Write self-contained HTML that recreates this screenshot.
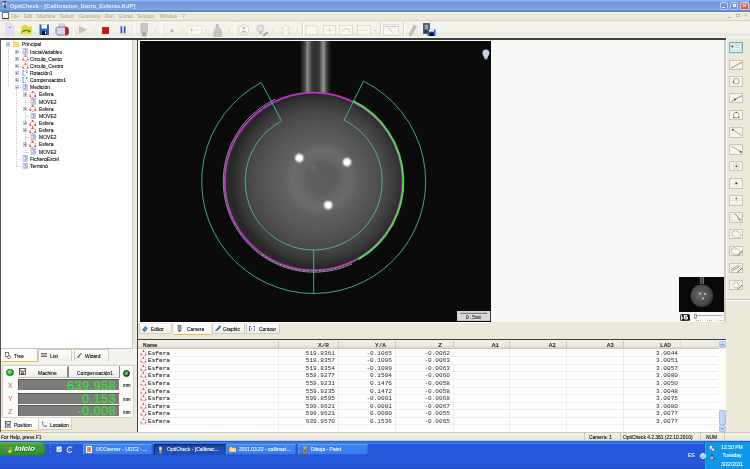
<!DOCTYPE html>
<html><head><meta charset="utf-8">
<style>
*{box-sizing:border-box}
html,body{margin:0;padding:0}
body{width:750px;height:469px;overflow:hidden;position:relative;background:#ECE9D8;font-family:"Liberation Sans",sans-serif;color:#000}
.a{position:absolute}
.t{position:absolute;white-space:nowrap;line-height:1;will-change:transform;-webkit-text-stroke:0.08px currentColor}
</style></head><body>

<!-- title bar -->
<div class="a" style="left:0;top:0;width:750px;height:11.8px;background:linear-gradient(#a0bef8 0,#8cb0ee 0.8px,#7198d8 2.2px,#7699da 5px,#7ba3e0 8px,#78a8dc 9.5px,#6285d2 10.8px,#5a7cca 11.8px)"></div><div class="a" style="left:0;top:11.8px;width:750px;height:0.8px;background:#f4f8ec"></div>
<div class="t" style="left:10px;top:3.6px;font-size:5.8px;font-weight:bold;color:#e6eefc;-webkit-text-stroke:0">OptiCheck - [Calibracion_Barra_Esferas.KdP]</div>
<svg class="a" style="left:1.8px;top:1.2px" width="5.6" height="8.4" viewBox="0 0 14 21"><rect x="3" y="0.5" width="8" height="4" fill="#2a2a30"/><rect x="2" y="4" width="10" height="7" fill="#e8e8ee"/><rect x="6" y="6" width="3" height="12" fill="#1e2a40"/></svg>
<div class="a" style="left:720px;top:1.6px;width:8px;height:8px;background:linear-gradient(#7d9ce6,#6a8ade);border:0.5px solid #bccbf0;border-radius:1.2px"></div>
<div class="a" style="left:722px;top:6.5px;width:3px;height:1px;background:#fff"></div>
<div class="a" style="left:730px;top:1.6px;width:8px;height:8px;background:linear-gradient(#7d9ce6,#6a8ade);border:0.5px solid #bccbf0;border-radius:1.2px"></div>
<div class="a" style="left:732.5px;top:3.5px;width:3.5px;height:3.5px;border:0.8px solid #fff"></div>
<div class="a" style="left:740px;top:1.6px;width:9px;height:8px;background:linear-gradient(#d07a78,#c05a5a);border:0.5px solid #e8c4c4;border-radius:1.2px"></div>
<svg class="a" style="left:742.3px;top:3.4px" width="4.6" height="4.6" viewBox="0 0 5 5"><path d="M0.6,0.6 L4.4,4.4 M4.4,0.6 L0.6,4.4" stroke="#fff" stroke-width="1"/></svg>

<!-- menu bar -->
<div class="a" style="left:0;top:12.6px;width:750px;height:7.4px;background:linear-gradient(#ebe7d9,#ece8dd 50%,#efebe2)"></div>
<div class="a" style="left:1.8px;top:12.4px;width:6.8px;height:6.2px;background:#fdfdfd;border:0.6px solid #777;border-top:1.4px solid #3d7fa0;border-bottom:0.9px solid #333"></div>
<div class="t" style="left:10.5px;top:15px;font-size:4.9px;color:#b3b09f;word-spacing:0">File</div>
<div class="t" style="left:24px;top:15px;font-size:4.9px;color:#b3b09f">Edit</div>
<div class="t" style="left:37.3px;top:15px;font-size:4.9px;color:#b3b09f">Machine</div>
<div class="t" style="left:60px;top:15px;font-size:4.9px;color:#b3b09f">Select</div>
<div class="t" style="left:78.7px;top:15px;font-size:4.9px;color:#b3b09f">Geometry</div>
<div class="t" style="left:104.5px;top:15px;font-size:4.9px;color:#b3b09f">Run</div>
<div class="t" style="left:118.7px;top:15px;font-size:4.9px;color:#b3b09f">Extras</div>
<div class="t" style="left:137.3px;top:15px;font-size:4.9px;color:#b3b09f">Session</div>
<div class="t" style="left:159.5px;top:15px;font-size:4.9px;color:#b3b09f">Window</div>
<div class="t" style="left:181.9px;top:15px;font-size:4.9px;color:#b3b09f">?</div>
<div class="a" style="left:727.6px;top:17.2px;width:3px;height:0.8px;background:#bcb9aa"></div>
<div class="a" style="left:736px;top:13.6px;width:3.6px;height:3.2px;border:0.6px solid #c4c1b2;border-top-width:1px"></div>
<svg class="a" style="left:744px;top:13.4px" width="3.6" height="3.6" viewBox="0 0 4 4"><path d="M0.5,0.5 L3.5,3.5 M3.5,0.5 L0.5,3.5" stroke="#bcb9aa" stroke-width="0.7"/></svg>

<!-- toolbar -->
<div class="a" style="left:0;top:19.6px;width:750px;height:18.6px;background:linear-gradient(#d6d2c2 0,#d6d2c2 0.9px,#f5f3eb 1.6px,#f3f2ea 60%,#e8e8e4 80%,#ecefdf 92%,#fbfbf2)"></div>
<div class="a" style="left:0;top:38.2px;width:726px;height:1.7px;background:#3e3e3a"></div>
<svg class="a" style="left:4.5px;top:23px" width="9.5" height="13" viewBox="0 0 19 26"><path d="M2,1 h10 l5,5 v19 h-15z" fill="#e6e2fa" stroke="#c4c0e0" stroke-width="1"/><path d="M6,8 l6,-1 -1,4z" fill="#8a8aa0"/><path d="M4,20 h10" stroke="#d8d4f0" stroke-width="2"/></svg>
<svg class="a" style="left:20px;top:24px" width="13.5" height="11.5" viewBox="0 0 27 23"><path d="M3,6 l4,-4 h7 l2,3 h8 v14 h-21z" fill="#f3d03a"/><path d="M1,12 h24 l-3,9 h-20z" fill="#f7dc55"/><path d="M2,20 c2,-8 8,-10 17,-7 l-2,-3 5,5 -6,3 1,-3 c-6,-2 -11,0 -15,5z" fill="#1c9a1c"/></svg>
<svg class="a" style="left:39px;top:24px" width="10.5" height="11.5" viewBox="0 0 21 23"><path d="M1,1 h19 v21 h-19z" fill="#2a62d0"/><rect x="5" y="1" width="11" height="8" fill="#fff"/><rect x="6" y="14" width="9" height="8" fill="#111"/><rect x="12" y="15" width="2" height="5" fill="#fff"/></svg>
<svg class="a" style="left:54.5px;top:23px" width="14.5" height="13" viewBox="0 0 29 26"><path d="M9,2 h10 v7 h-10z" fill="#dedee8" stroke="#a8a8b8" stroke-width="1"/><path d="M2,12 c0,-3 3,-4 6,-4 h14 c3,0 5,2 5,5 v7 c0,3 -2,4 -5,4 h-14 c-4,0 -6,-2 -6,-5z" fill="#d8d4f2" stroke="#3a3a4a" stroke-width="1.2"/><path d="M20,8 c4,0 7,2 7,6 v6 c0,3 -2,4 -5,4 h-2z" fill="#c0202a"/></svg>
<div class="a" style="left:72.8px;top:22px;width:0.6px;height:14px;background:#d6d3c4"></div><div class="a" style="left:73.39999999999999px;top:22px;width:0.6px;height:14px;background:#fff"></div>
<svg class="a" style="left:79px;top:26.4px" width="8" height="7.6" viewBox="0 0 16 15"><path d="M1,1 L15,7.5 L1,14z" fill="#c4c4c4" stroke="#a8a8a8" stroke-width="1"/></svg>
<div class="a" style="left:93px;top:29.8px;width:0;height:0;border-left:1px solid transparent;border-right:1px solid transparent;border-top:1px solid #b0ae9e"></div>
<svg class="a" style="left:101.7px;top:26.6px" width="7.5" height="7.3" viewBox="0 0 15 15"><rect x="0.5" y="0.5" width="14" height="14" fill="#e01010" stroke="#b00000"/></svg>
<svg class="a" style="left:120.2px;top:26.4px" width="6" height="7.6" viewBox="0 0 12 15"><rect x="1" y="0.5" width="3.5" height="14" fill="#2a58c8"/><rect x="7.5" y="0.5" width="3.5" height="14" fill="#2a58c8"/></svg>
<div class="a" style="left:133.5px;top:22px;width:0.6px;height:14px;background:#d6d3c4"></div><div class="a" style="left:134.1px;top:22px;width:0.6px;height:14px;background:#fff"></div>
<svg class="a" style="left:140.3px;top:22.7px" width="8.4" height="14" viewBox="0 0 17 28"><rect x="2" y="1" width="13" height="18" fill="#c8c8c4" stroke="#a8a8a4" stroke-width="1"/><rect x="4" y="19" width="9" height="8" fill="#a8a8a4"/></svg>
<div class="a" style="left:154.2px;top:29.8px;width:0;height:0;border-left:1px solid transparent;border-right:1px solid transparent;border-top:1px solid #b0ae9e"></div>
<div class="a" style="left:160.8px;top:22px;width:0.6px;height:14px;background:#d6d3c4"></div><div class="a" style="left:161.4px;top:22px;width:0.6px;height:14px;background:#fff"></div>
<svg class="a" style="left:170px;top:29px" width="4" height="3.5" viewBox="0 0 8 7"><circle cx="4" cy="3.5" r="3" fill="#b4b4b0"/></svg>
<div class="a" style="left:181px;top:29.8px;width:0;height:0;border-left:1px solid transparent;border-right:1px solid transparent;border-top:1px solid #b0ae9e"></div>
<svg class="a" style="left:187px;top:24.5px" width="15" height="10.3" viewBox="0 0 30 21"><rect x="1" y="1" width="28" height="19" fill="#faf9f4" stroke="#c8c6bb" stroke-width="1.2" stroke-dasharray="3 2"/><circle cx="9" cy="10" r="2" fill="#b0aea4"/><path d="M9,4 v12 M13,10 h10" stroke="#c8c6bb" stroke-width="1"/></svg>
<div class="a" style="left:204.6px;top:29.8px;width:0;height:0;border-left:1px solid transparent;border-right:1px solid transparent;border-top:1px solid #b0ae9e"></div>
<svg class="a" style="left:212px;top:23.5px" width="11" height="13" viewBox="0 0 22 26"><path d="M8,1 h5 v6 c4,2 6,5 6,9 v9 h-15 v-9 c0,-4 2,-7 4,-9z" fill="#c6c6c2" stroke="#aaa" stroke-width="1"/></svg>
<div class="a" style="left:228px;top:29.8px;width:0;height:0;border-left:1px solid transparent;border-right:1px solid transparent;border-top:1px solid #b0ae9e"></div>
<div class="a" style="left:233.6px;top:22px;width:0.6px;height:14px;background:#d6d3c4"></div><div class="a" style="left:234.2px;top:22px;width:0.6px;height:14px;background:#fff"></div>
<svg class="a" style="left:238px;top:24px" width="11.5" height="11.5" viewBox="0 0 23 23"><circle cx="11.5" cy="11.5" r="10" fill="#f8f7f2" stroke="#c0beb3" stroke-width="1.2"/><circle cx="11.5" cy="8" r="2.5" fill="#b8b6ac"/><path d="M7,17 c1,-5 8,-5 9,0" fill="#b8b6ac"/></svg>
<svg class="a" style="left:256px;top:23.5px" width="13" height="13" viewBox="0 0 26 26"><circle cx="9" cy="9" r="7" fill="#e4e4e2" stroke="#b0b0ac" stroke-width="1.2"/><rect x="6" y="15" width="6" height="5" fill="#c0c0bc"/><path d="M13,22 l9,-7 3,3 -9,7z" fill="#a8a8a4"/></svg>
<div class="a" style="left:272px;top:29.8px;width:0;height:0;border-left:1px solid transparent;border-right:1px solid transparent;border-top:1px solid #b0ae9e"></div>
<svg class="a" style="left:279.6px;top:23.5px" width="11.2" height="13" viewBox="0 0 22 26"><path d="M11,1 l9,8 h-4 v8 h4 l-9,8 -9,-8 h4 v-8 h-4z" fill="#f6f5f0" stroke="#c8c6bc" stroke-width="1"/></svg>
<div class="a" style="left:296px;top:29.8px;width:0;height:0;border-left:1px solid transparent;border-right:1px solid transparent;border-top:1px solid #b0ae9e"></div>
<div class="a" style="left:302px;top:22px;width:0.6px;height:14px;background:#d6d3c4"></div><div class="a" style="left:302.6px;top:22px;width:0.6px;height:14px;background:#fff"></div>
<svg class="a" style="left:304.8px;top:24.5px" width="13.2" height="10.3" viewBox="0 0 26 21"><rect x="1.5" y="1.5" width="23" height="18" fill="#f8f7f2" stroke="#b8b6ac" stroke-width="1.2" stroke-dasharray="4 2"/></svg>
<svg class="a" style="left:322.5px;top:24.5px" width="13.2" height="10.3" viewBox="0 0 26 21"><rect x="1" y="1" width="24" height="19" fill="#f8f7f2" stroke="#c8c6bb" stroke-width="1"/><path d="M13,5 v11 M7,10.5 h12" stroke="#b0aea4" stroke-width="1.2" stroke-dasharray="2 1.5"/></svg>
<svg class="a" style="left:339.3px;top:24.5px" width="14" height="10.3" viewBox="0 0 28 21"><rect x="1" y="1" width="26" height="19" fill="#f8f7f2" stroke="#c8c6bb" stroke-width="1"/><path d="M6,14 c2,-7 12,-9 16,-2 l1,4" fill="none" stroke="#b0aea4" stroke-width="1.4"/></svg>
<svg class="a" style="left:357px;top:24.5px" width="14" height="10.3" viewBox="0 0 28 21"><rect x="1" y="1" width="26" height="19" fill="#f8f7f2" stroke="#c8c6bb" stroke-width="1"/><path d="M4,10.5 h20" stroke="#b8b6ac" stroke-width="1.2" stroke-dasharray="3 2"/></svg>
<div class="a" style="left:373.8px;top:29.8px;width:0;height:0;border-left:1px solid transparent;border-right:1px solid transparent;border-top:1px solid #b0ae9e"></div>
<div class="a" style="left:380.4px;top:22px;width:0.6px;height:14px;background:#d6d3c4"></div><div class="a" style="left:381.0px;top:22px;width:0.6px;height:14px;background:#fff"></div>
<svg class="a" style="left:383px;top:24px" width="16" height="11.5" viewBox="0 0 32 23"><rect x="1" y="1" width="30" height="21" fill="#f8f7f2" stroke="#c8c6bb" stroke-width="1"/><path d="M3,5 h26 M10,8 l12,11" stroke="#a8a6a0" stroke-width="1.2"/></svg>
<div class="a" style="left:403.3px;top:22px;width:0.6px;height:14px;background:#d6d3c4"></div><div class="a" style="left:403.90000000000003px;top:22px;width:0.6px;height:14px;background:#fff"></div>
<svg class="a" style="left:408px;top:23.5px" width="10" height="12.5" viewBox="0 0 20 25"><path d="M12,1 l6,4 -10,17 -6,-3z" fill="#c0c0bc"/><path d="M2,19 l6,3 -4,3z" fill="#a8a8a4"/></svg>
<svg class="a" style="left:423px;top:22.8px" width="13" height="13.5" viewBox="0 0 26 27"><rect x="1" y="1" width="12" height="20" fill="#3a3a40" stroke="#222" stroke-width="1"/><rect x="3" y="3" width="8" height="10" fill="#9aa0b8"/><path d="M9,13 h16 v13 h-16z" fill="#2a62d0"/><rect x="13" y="19" width="8" height="7" fill="#111"/><rect x="12" y="13" width="10" height="4" fill="#fff"/></svg>
<!-- left panel -->
<div class="a" style="left:0;top:40px;width:1px;height:392px;background:#555"></div>
<div id="tree" class="a" style="left:1px;top:40px;width:132px;height:308.5px;background:#fff;border-right:1.5px solid #c8c6bb;border-bottom:1px solid #c8c6bb"></div>

<!-- tree items -->
<div class="a" style="left:8.2px;top:46.4px;width:0;height:40.8px;border-left:0.6px dotted #c8c8c8"></div>
<div class="a" style="left:16.4px;top:89.2px;width:0;height:76.5px;border-left:0.6px dotted #c8c8c8"></div>
<div class="a" style="left:24.8px;top:96.4px;width:0;height:55.1px;border-left:0.6px dotted #c8c8c8"></div>
<div class="a" style="left:16.4px;top:51.5px;width:4.9px;height:0;border-top:0.6px dotted #c8c8c8"></div>
<div class="a" style="left:16.4px;top:58.7px;width:4.9px;height:0;border-top:0.6px dotted #c8c8c8"></div>
<div class="a" style="left:16.4px;top:65.8px;width:4.9px;height:0;border-top:0.6px dotted #c8c8c8"></div>
<div class="a" style="left:16.4px;top:73.0px;width:4.9px;height:0;border-top:0.6px dotted #c8c8c8"></div>
<div class="a" style="left:16.4px;top:80.1px;width:4.9px;height:0;border-top:0.6px dotted #c8c8c8"></div>
<div class="a" style="left:16.4px;top:87.2px;width:4.9px;height:0;border-top:0.6px dotted #c8c8c8"></div>
<div class="a" style="left:24.8px;top:94.4px;width:4.2px;height:0;border-top:0.6px dotted #c8c8c8"></div>
<div class="a" style="left:24.8px;top:101.5px;width:4.2px;height:0;border-top:0.6px dotted #c8c8c8"></div>
<div class="a" style="left:24.8px;top:108.7px;width:4.2px;height:0;border-top:0.6px dotted #c8c8c8"></div>
<div class="a" style="left:24.8px;top:115.8px;width:4.2px;height:0;border-top:0.6px dotted #c8c8c8"></div>
<div class="a" style="left:24.8px;top:122.9px;width:4.2px;height:0;border-top:0.6px dotted #c8c8c8"></div>
<div class="a" style="left:24.8px;top:130.1px;width:4.2px;height:0;border-top:0.6px dotted #c8c8c8"></div>
<div class="a" style="left:24.8px;top:137.2px;width:4.2px;height:0;border-top:0.6px dotted #c8c8c8"></div>
<div class="a" style="left:24.8px;top:144.4px;width:4.2px;height:0;border-top:0.6px dotted #c8c8c8"></div>
<div class="a" style="left:24.8px;top:151.5px;width:4.2px;height:0;border-top:0.6px dotted #c8c8c8"></div>
<div class="a" style="left:16.4px;top:158.6px;width:4.9px;height:0;border-top:0.6px dotted #c8c8c8"></div>
<div class="a" style="left:16.4px;top:165.8px;width:4.9px;height:0;border-top:0.6px dotted #c8c8c8"></div>
<div class="a" style="left:6.2px;top:42.40px;width:4.2px;height:4.2px;border:0.6px solid #c4c8d0;background:linear-gradient(#f4f4f4,#d4d8dc)"></div>
<div class="a" style="left:7.2px;top:44.20px;width:2.2px;height:0.6px;background:#8494a4"></div>
<svg class="a" style="left:13.2px;top:41.40px" width="6.5" height="6" viewBox="0 0 13 12"><path d="M0.5,2 h4 l1,1.5 h7 v8 h-12z" fill="#f6d94a" stroke="#c9a21a" stroke-width="0.8"/><path d="M0.5,4.5 h12 v7 h-12z" fill="#fbe26b"/></svg>
<div class="t" style="left:21.8px;top:42.40px;font-size:5px">Principal</div>
<div class="a" style="left:14.6px;top:49.54px;width:4.2px;height:4.2px;border:0.6px solid #c4c8d0;background:linear-gradient(#f4f4f4,#d4d8dc)"></div>
<div class="a" style="left:15.6px;top:51.34px;width:2.2px;height:0.6px;background:#8494a4"></div>
<div class="a" style="left:16.4px;top:50.54px;width:0.6px;height:2.2px;background:#8494a4"></div>
<svg class="a" style="left:21.8px;top:48.34px" width="6" height="6.6" viewBox="0 0 12 13"><rect x="2" y="0.5" width="8.5" height="12" fill="#e4e4fa" stroke="#8484c4" stroke-width="0.9"/><path d="M5,3 h3 v6 c0,2 -3,2 -3.5,0" fill="none" stroke="#4a4a9a" stroke-width="1.1"/></svg>
<div class="t" style="left:30.1px;top:49.54px;font-size:5px">IniciaVariables</div>
<div class="a" style="left:14.6px;top:56.68px;width:4.2px;height:4.2px;border:0.6px solid #c4c8d0;background:linear-gradient(#f4f4f4,#d4d8dc)"></div>
<div class="a" style="left:15.6px;top:58.48px;width:2.2px;height:0.6px;background:#8494a4"></div>
<div class="a" style="left:16.4px;top:57.68px;width:0.6px;height:2.2px;background:#8494a4"></div>
<svg class="a" style="left:21.5px;top:55.38px" width="7.0" height="6.65" viewBox="0 0 14 13"><circle cx="7" cy="7" r="5" fill="none" stroke="#c82020" stroke-width="1.3" stroke-dasharray="2.2 1.6"/><circle cx="7" cy="1.8" r="1.5" fill="#d81818"/><circle cx="2.3" cy="9.5" r="1.5" fill="#d81818"/><circle cx="11.7" cy="9.5" r="1.5" fill="#d81818"/></svg>
<div class="t" style="left:30.1px;top:56.68px;font-size:5px">Circulo_Canto</div>
<div class="a" style="left:14.6px;top:63.82px;width:4.2px;height:4.2px;border:0.6px solid #c4c8d0;background:linear-gradient(#f4f4f4,#d4d8dc)"></div>
<div class="a" style="left:15.6px;top:65.62px;width:2.2px;height:0.6px;background:#8494a4"></div>
<div class="a" style="left:16.4px;top:64.82px;width:0.6px;height:2.2px;background:#8494a4"></div>
<svg class="a" style="left:21.5px;top:62.52px" width="7.0" height="6.65" viewBox="0 0 14 13"><circle cx="7" cy="7" r="5" fill="none" stroke="#c82020" stroke-width="1.3" stroke-dasharray="2.2 1.6"/><circle cx="7" cy="1.8" r="1.5" fill="#d81818"/><circle cx="2.3" cy="9.5" r="1.5" fill="#d81818"/><circle cx="11.7" cy="9.5" r="1.5" fill="#d81818"/></svg>
<div class="t" style="left:30.1px;top:63.82px;font-size:5px">Circulo_Centro</div>
<div class="a" style="left:14.6px;top:70.96px;width:4.2px;height:4.2px;border:0.6px solid #c4c8d0;background:linear-gradient(#f4f4f4,#d4d8dc)"></div>
<div class="a" style="left:15.6px;top:72.76px;width:2.2px;height:0.6px;background:#8494a4"></div>
<div class="a" style="left:16.4px;top:71.96px;width:0.6px;height:2.2px;background:#8494a4"></div>
<svg class="a" style="left:21.8px;top:69.76px" width="6.5" height="6.5" viewBox="0 0 13 13"><path d="M2,1 v11 M0.5,1 h3 M0.5,12 h8" stroke="#2050c0" stroke-width="1.2" fill="none"/><circle cx="10" cy="3" r="2.2" fill="none" stroke="#2050c0" stroke-width="1"/></svg>
<div class="t" style="left:30.1px;top:70.96px;font-size:5px">Rotación1</div>
<div class="a" style="left:14.6px;top:78.10px;width:4.2px;height:4.2px;border:0.6px solid #c4c8d0;background:linear-gradient(#f4f4f4,#d4d8dc)"></div>
<div class="a" style="left:15.6px;top:79.90px;width:2.2px;height:0.6px;background:#8494a4"></div>
<div class="a" style="left:16.4px;top:79.10px;width:0.6px;height:2.2px;background:#8494a4"></div>
<svg class="a" style="left:21.8px;top:76.90px" width="6.5" height="6.5" viewBox="0 0 13 13"><path d="M2,1 v11 M0.5,1 h3 M0.5,12 h8" stroke="#2050c0" stroke-width="1.2" fill="none"/><path d="M7,1 l5,0 l-2.5,4z" fill="#20b020"/></svg>
<div class="t" style="left:30.1px;top:78.10px;font-size:5px">Compensación1</div>
<div class="a" style="left:14.6px;top:85.24px;width:4.2px;height:4.2px;border:0.6px solid #c4c8d0;background:linear-gradient(#f4f4f4,#d4d8dc)"></div>
<div class="a" style="left:15.6px;top:87.04px;width:2.2px;height:0.6px;background:#8494a4"></div>
<svg class="a" style="left:21.8px;top:84.04px" width="6" height="6.6" viewBox="0 0 12 13"><rect x="2" y="0.5" width="8.5" height="12" fill="#e4e4fa" stroke="#8484c4" stroke-width="0.9"/><path d="M5,3 h3 v6 c0,2 -3,2 -3.5,0" fill="none" stroke="#4a4a9a" stroke-width="1.1"/></svg>
<div class="t" style="left:30.1px;top:85.24px;font-size:5px">Medición</div>
<div class="a" style="left:23px;top:92.38px;width:4.2px;height:4.2px;border:0.6px solid #c4c8d0;background:linear-gradient(#f4f4f4,#d4d8dc)"></div>
<div class="a" style="left:24px;top:94.18px;width:2.2px;height:0.6px;background:#8494a4"></div>
<div class="a" style="left:24.8px;top:93.38px;width:0.6px;height:2.2px;background:#8494a4"></div>
<svg class="a" style="left:29.2px;top:91.08px" width="7.5" height="7.12" viewBox="0 0 14 13"><circle cx="7" cy="7" r="5" fill="none" stroke="#c82020" stroke-width="1.3" stroke-dasharray="2.2 1.6"/><circle cx="7" cy="1.8" r="1.5" fill="#d81818"/><circle cx="2.3" cy="9.5" r="1.5" fill="#d81818"/><circle cx="11.7" cy="9.5" r="1.5" fill="#d81818"/></svg>
<div class="t" style="left:38.6px;top:92.38px;font-size:5px">Esfera</div>
<svg class="a" style="left:29.5px;top:98.32px" width="6" height="6.6" viewBox="0 0 12 13"><rect x="2" y="0.5" width="8.5" height="12" fill="#e4e4fa" stroke="#8484c4" stroke-width="0.9"/><path d="M5,3 h3 v6 c0,2 -3,2 -3.5,0" fill="none" stroke="#4a4a9a" stroke-width="1.1"/></svg>
<div class="t" style="left:38.6px;top:99.52px;font-size:5px">MOVE2</div>
<div class="a" style="left:23px;top:106.66px;width:4.2px;height:4.2px;border:0.6px solid #c4c8d0;background:linear-gradient(#f4f4f4,#d4d8dc)"></div>
<div class="a" style="left:24px;top:108.46px;width:2.2px;height:0.6px;background:#8494a4"></div>
<div class="a" style="left:24.8px;top:107.66px;width:0.6px;height:2.2px;background:#8494a4"></div>
<svg class="a" style="left:29.2px;top:105.36px" width="7.5" height="7.12" viewBox="0 0 14 13"><circle cx="7" cy="7" r="5" fill="none" stroke="#c82020" stroke-width="1.3" stroke-dasharray="2.2 1.6"/><circle cx="7" cy="1.8" r="1.5" fill="#d81818"/><circle cx="2.3" cy="9.5" r="1.5" fill="#d81818"/><circle cx="11.7" cy="9.5" r="1.5" fill="#d81818"/></svg>
<div class="t" style="left:38.6px;top:106.66px;font-size:5px">Esfera</div>
<svg class="a" style="left:29.5px;top:112.60px" width="6" height="6.6" viewBox="0 0 12 13"><rect x="2" y="0.5" width="8.5" height="12" fill="#e4e4fa" stroke="#8484c4" stroke-width="0.9"/><path d="M5,3 h3 v6 c0,2 -3,2 -3.5,0" fill="none" stroke="#4a4a9a" stroke-width="1.1"/></svg>
<div class="t" style="left:38.6px;top:113.80px;font-size:5px">MOVE2</div>
<div class="a" style="left:23px;top:120.94px;width:4.2px;height:4.2px;border:0.6px solid #c4c8d0;background:linear-gradient(#f4f4f4,#d4d8dc)"></div>
<div class="a" style="left:24px;top:122.74px;width:2.2px;height:0.6px;background:#8494a4"></div>
<div class="a" style="left:24.8px;top:121.94px;width:0.6px;height:2.2px;background:#8494a4"></div>
<svg class="a" style="left:29.2px;top:119.64px" width="7.5" height="7.12" viewBox="0 0 14 13"><circle cx="7" cy="7" r="5" fill="none" stroke="#c82020" stroke-width="1.3" stroke-dasharray="2.2 1.6"/><circle cx="7" cy="1.8" r="1.5" fill="#d81818"/><circle cx="2.3" cy="9.5" r="1.5" fill="#d81818"/><circle cx="11.7" cy="9.5" r="1.5" fill="#d81818"/></svg>
<div class="t" style="left:38.6px;top:120.94px;font-size:5px">Esfera</div>
<div class="a" style="left:23px;top:128.08px;width:4.2px;height:4.2px;border:0.6px solid #c4c8d0;background:linear-gradient(#f4f4f4,#d4d8dc)"></div>
<div class="a" style="left:24px;top:129.88px;width:2.2px;height:0.6px;background:#8494a4"></div>
<div class="a" style="left:24.8px;top:129.08px;width:0.6px;height:2.2px;background:#8494a4"></div>
<svg class="a" style="left:29.2px;top:126.78px" width="7.5" height="7.12" viewBox="0 0 14 13"><circle cx="7" cy="7" r="5" fill="none" stroke="#c82020" stroke-width="1.3" stroke-dasharray="2.2 1.6"/><circle cx="7" cy="1.8" r="1.5" fill="#d81818"/><circle cx="2.3" cy="9.5" r="1.5" fill="#d81818"/><circle cx="11.7" cy="9.5" r="1.5" fill="#d81818"/></svg>
<div class="t" style="left:38.6px;top:128.08px;font-size:5px">Esfera</div>
<svg class="a" style="left:29.5px;top:134.02px" width="6" height="6.6" viewBox="0 0 12 13"><rect x="2" y="0.5" width="8.5" height="12" fill="#e4e4fa" stroke="#8484c4" stroke-width="0.9"/><path d="M5,3 h3 v6 c0,2 -3,2 -3.5,0" fill="none" stroke="#4a4a9a" stroke-width="1.1"/></svg>
<div class="t" style="left:38.6px;top:135.22px;font-size:5px">MOVE2</div>
<div class="a" style="left:23px;top:142.36px;width:4.2px;height:4.2px;border:0.6px solid #c4c8d0;background:linear-gradient(#f4f4f4,#d4d8dc)"></div>
<div class="a" style="left:24px;top:144.16px;width:2.2px;height:0.6px;background:#8494a4"></div>
<div class="a" style="left:24.8px;top:143.36px;width:0.6px;height:2.2px;background:#8494a4"></div>
<svg class="a" style="left:29.2px;top:141.06px" width="7.5" height="7.12" viewBox="0 0 14 13"><circle cx="7" cy="7" r="5" fill="none" stroke="#c82020" stroke-width="1.3" stroke-dasharray="2.2 1.6"/><circle cx="7" cy="1.8" r="1.5" fill="#d81818"/><circle cx="2.3" cy="9.5" r="1.5" fill="#d81818"/><circle cx="11.7" cy="9.5" r="1.5" fill="#d81818"/></svg>
<div class="t" style="left:38.6px;top:142.36px;font-size:5px">Esfera</div>
<svg class="a" style="left:29.5px;top:148.30px" width="6" height="6.6" viewBox="0 0 12 13"><rect x="2" y="0.5" width="8.5" height="12" fill="#e4e4fa" stroke="#8484c4" stroke-width="0.9"/><path d="M5,3 h3 v6 c0,2 -3,2 -3.5,0" fill="none" stroke="#4a4a9a" stroke-width="1.1"/></svg>
<div class="t" style="left:38.6px;top:149.50px;font-size:5px">MOVE2</div>
<svg class="a" style="left:21.8px;top:155.44px" width="6" height="6.6" viewBox="0 0 12 13"><rect x="2" y="0.5" width="8.5" height="12" fill="#e4e4fa" stroke="#8484c4" stroke-width="0.9"/><path d="M5,3 h3 v6 c0,2 -3,2 -3.5,0" fill="none" stroke="#4a4a9a" stroke-width="1.1"/></svg>
<div class="t" style="left:30.1px;top:156.64px;font-size:5px">FicheroExcel</div>
<svg class="a" style="left:21.8px;top:162.58px" width="6" height="6.6" viewBox="0 0 12 13"><rect x="2" y="0.5" width="8.5" height="12" fill="#e4e4fa" stroke="#8484c4" stroke-width="0.9"/><path d="M5,3 h3 v6 c0,2 -3,2 -3.5,0" fill="none" stroke="#4a4a9a" stroke-width="1.1"/></svg>
<div class="t" style="left:30.1px;top:163.78px;font-size:5px">Terminó</div>
<!-- left tabs -->
<div class="a" style="left:1px;top:348.5px;width:136px;height:15.5px;background:#f4f3ee"></div>
<div class="a" style="left:1px;top:348.7px;width:37px;height:13.3px;background:#fcfcfa;border-right:0.5px solid #c8c6bb"></div>
<div class="a" style="left:1px;top:360.5px;width:37px;height:1.5px;background:#efb83a"></div>
<svg class="a" style="left:4.8px;top:351.5px" width="6" height="7" viewBox="0 0 12 14"><rect x="1" y="1" width="6" height="8" fill="#fff" stroke="#333" stroke-width="1.2"/><circle cx="8" cy="10" r="3" fill="#fff" stroke="#333" stroke-width="1.2"/></svg>
<div class="t" style="left:13.5px;top:353.7px;font-size:5px">Tree</div>
<div class="a" style="left:38px;top:349.3px;width:34px;height:12px;background:linear-gradient(#fefefc,#f0efe8);border:0.5px solid #d0cec2;border-bottom:none"></div>
<svg class="a" style="left:41px;top:352.5px" width="6" height="5" viewBox="0 0 12 10"><path d="M0,1 h12 M0,4 h12 M0,7 h12" stroke="#555" stroke-width="1.6"/></svg>
<div class="t" style="left:49.8px;top:353.7px;font-size:5px">List</div>
<div class="a" style="left:73.5px;top:349.3px;width:35px;height:12px;background:linear-gradient(#fefefc,#f0efe8);border:0.5px solid #d0cec2;border-bottom:none"></div>
<svg class="a" style="left:77px;top:352px" width="6.5" height="6" viewBox="0 0 13 12"><path d="M1,11 L9,2" stroke="#333" stroke-width="2"/><path d="M2,11 l3,-1" stroke="#3a3" stroke-width="2"/></svg>
<div class="t" style="left:85px;top:353.7px;font-size:5px">Wizard</div>

<!-- position panel -->
<div class="a" style="left:1.5px;top:364.5px;width:132px;height:53px;background:#fbfbf9;border:0.5px solid #d6d4ca"></div>
<div class="a" style="left:6.4px;top:369px;width:7.4px;height:7.4px;border-radius:50%;background:radial-gradient(circle at 40% 35%,#8ff08f,#1fbf1f 55%,#0a7a0a);border:0.5px solid #1a5a1a"></div>
<div class="a" style="left:17.6px;top:366.5px;width:50.5px;height:11.5px;background:linear-gradient(#fdfdfb,#f0efe9);border-right:0.8px solid #8a8a84;border-bottom:0.5px solid #c8c6bb"></div>
<svg class="a" style="left:18.8px;top:368.4px" width="7" height="7" viewBox="0 0 14 14"><rect x="1" y="1" width="12" height="12" fill="#fff" stroke="#222" stroke-width="1.5"/><path d="M3,3 l2,7 l2,-5 l2,5 l2,-7" stroke="#333" stroke-width="1.2" fill="none"/><rect x="4" y="10" width="6" height="2.5" fill="#d22"/></svg>
<div class="t" style="left:37.8px;top:370.9px;font-size:5px">Machine</div>
<div class="a" style="left:68.3px;top:366px;width:52px;height:12.4px;background:linear-gradient(#fdfdfb,#f0efe9);border-left:0.8px solid #8a8a84;border-right:0.8px solid #8a8a84;border-bottom:0.5px solid #c8c6bb"></div>
<div class="t" style="left:76.6px;top:370.9px;font-size:5px">Compensación1</div>
<div class="a" style="left:122.8px;top:369.6px;width:7px;height:7px;border-radius:50%;background:radial-gradient(circle at 40% 35%,#4cc04c,#0e7a0e 60%,#064a06);border:0.5px solid #0a3a0a"></div>
<div class="a" style="left:124.8px;top:372.5px;width:3px;height:0.8px;background:#aee8ae;transform:rotate(-45deg)"></div>
<div class="t" style="left:7.6px;top:382.09999999999997px;font-size:7px;color:#c45a5a;-webkit-text-stroke:0">X</div>
<div class="a" style="left:17.6px;top:379.2px;width:101.4px;height:11.2px;background:#7c7c7a;border-top:0.6px solid #5a5a58;border-left:0.6px solid #5a5a58"></div>
<div class="t" style="left:17.6px;width:98px;text-align:right;top:380.4px;font-size:12.6px;color:#3ee03e;letter-spacing:0.5px;font-weight:normal;-webkit-text-stroke:0.25px currentColor">639.958</div>
<div class="t" style="left:122.7px;top:384.4px;font-size:4.6px">mm</div>
<div class="t" style="left:7.6px;top:395.4px;font-size:7px;color:#c45a5a;-webkit-text-stroke:0">Y</div>
<div class="a" style="left:17.6px;top:392.5px;width:101.4px;height:11.2px;background:#7c7c7a;border-top:0.6px solid #5a5a58;border-left:0.6px solid #5a5a58"></div>
<div class="t" style="left:17.6px;width:98px;text-align:right;top:393.4px;font-size:12.6px;color:#3ee03e;letter-spacing:0.5px;font-weight:normal;-webkit-text-stroke:0.25px currentColor">0.153</div>
<div class="t" style="left:122.7px;top:397.7px;font-size:4.6px">mm</div>
<div class="t" style="left:7.6px;top:408.29999999999995px;font-size:7px;color:#c45a5a;-webkit-text-stroke:0">Z</div>
<div class="a" style="left:17.6px;top:405.4px;width:101.4px;height:10.3px;background:#7c7c7a;border-top:0.6px solid #5a5a58;border-left:0.6px solid #5a5a58"></div>
<div class="t" style="left:17.6px;width:98px;text-align:right;top:405.3px;font-size:12.6px;color:#3ee03e;letter-spacing:0.5px;font-weight:normal;-webkit-text-stroke:0.25px currentColor">-0.008</div>
<div class="t" style="left:122.7px;top:410.59999999999997px;font-size:4.6px">mm</div>

<!-- bottom tabs -->
<div class="a" style="left:1px;top:418.3px;width:37px;height:12.5px;background:#fcfcfa"></div>
<div class="a" style="left:1px;top:430px;width:37px;height:1.3px;background:#efb83a"></div>
<svg class="a" style="left:4.5px;top:420.5px" width="6.5" height="7.5" viewBox="0 0 13 15"><rect x="1" y="1" width="11" height="13" fill="#e8e8f0" stroke="#333" stroke-width="1.4"/><path d="M3,3 l2,8 l1.5,-5 l1.5,5 l2,-8" stroke="#333" stroke-width="1.1" fill="none"/></svg>
<div class="t" style="left:13.8px;top:422.5px;font-size:5px">Position</div>
<div class="a" style="left:38.4px;top:418.3px;width:34px;height:11.7px;background:linear-gradient(#fefefc,#f0efe8);border:0.5px solid #d0cec2;border-top:none"></div>
<svg class="a" style="left:40.5px;top:420.8px" width="6.5" height="6.5" viewBox="0 0 13 13"><path d="M4,4 c-2,4 2,8 6,6" stroke="#333" stroke-width="1.3" fill="none"/><circle cx="3" cy="2.5" r="1.5" fill="#2a58c8"/><circle cx="10" cy="10" r="1.5" fill="#2a58c8"/></svg>
<div class="t" style="left:49.5px;top:422.5px;font-size:5px">Location</div>
<!-- splitter / right panel border -->
<div class="a" style="left:137px;top:40px;width:1.4px;height:392px;background:#404040"></div>

<!-- image frame -->
<div class="a" style="left:138.4px;top:40px;width:353px;height:283px;background:#fbfbfa"></div>
<div id="img" class="a" style="left:140px;top:41px;width:351px;height:280.5px;background:#0a0a0a;overflow:hidden">
<svg width="351" height="281" viewBox="0 0 351 281" style="position:absolute;left:0;top:0;will-change:transform">
<defs>
<radialGradient id="sph" cx="177.7" cy="139.5" r="89.9" gradientUnits="userSpaceOnUse">
<stop offset="0" stop-color="#686868"/>
<stop offset="0.3" stop-color="#636363"/>
<stop offset="0.55" stop-color="#585858"/>
<stop offset="0.75" stop-color="#494949"/>
<stop offset="0.88" stop-color="#383838"/>
<stop offset="0.97" stop-color="#262626"/>
<stop offset="1" stop-color="#2a2a2a"/>
</radialGradient>
<radialGradient id="spot"><stop offset="0" stop-color="#fff"/><stop offset="0.4" stop-color="#fff"/><stop offset="0.6" stop-color="#ddd" stop-opacity="0.85"/><stop offset="1" stop-color="#999" stop-opacity="0"/></radialGradient>
<linearGradient id="rod" x1="0" x2="1"><stop offset="0" stop-color="#121212"/><stop offset="0.08" stop-color="#2a2a2a"/><stop offset="0.17" stop-color="#505050"/><stop offset="0.23" stop-color="#8c8c8c"/><stop offset="0.3" stop-color="#686868"/><stop offset="0.38" stop-color="#3a3a3a"/><stop offset="0.5" stop-color="#2e2e2e"/><stop offset="0.62" stop-color="#3a3a3a"/><stop offset="0.7" stop-color="#6e6e6e"/><stop offset="0.77" stop-color="#969696"/><stop offset="0.84" stop-color="#505050"/><stop offset="0.92" stop-color="#2a2a2a"/><stop offset="1" stop-color="#121212"/></linearGradient>
<filter id="noise" x="0" y="0" width="1" height="1"><feTurbulence type="fractalNoise" baseFrequency="0.35 0.9" numOctaves="2" seed="3"/><feColorMatrix values="0 0 0 0 0  0 0 0 0 0  0 0 0 0 0  0 0 0 1.6 -0.75"/><feComposite in2="SourceGraphic" operator="in"/></filter>
<filter id="blur3" x="-50%" y="-50%" width="200%" height="200%"><feGaussianBlur stdDeviation="3"/></filter><filter id="blur1" x="-50%" y="-50%" width="200%" height="200%"><feGaussianBlur stdDeviation="0.8"/></filter>
</defs>
<rect x="160.2" y="0" width="30.6" height="52" fill="url(#rod)"/>
<circle cx="173.70" cy="140.50" r="88.9" fill="url(#sph)"/>
<g filter="url(#blur3)"><circle cx="182" cy="138" r="29" fill="none" stroke="#fff" stroke-width="10" opacity="0.06"/><circle cx="182" cy="137" r="17" fill="#000" opacity="0.09"/></g>
<rect x="172" y="123.5" width="4" height="7" fill="#777" opacity="0.55" filter="url(#blur1)"/>
<circle cx="159.3" cy="117" r="6" fill="url(#spot)"/>
<circle cx="207" cy="121.1" r="6" fill="url(#spot)"/>
<circle cx="188.2" cy="164.1" r="6" fill="url(#spot)"/>
<circle cx="173.70" cy="140.50" r="88.9" fill="none" stroke="#c42cc8" stroke-width="1.8"/>
<path d="M213.02,59.88 A89.7,89.7 0 0 1 218.55,218.18" fill="none" stroke="#46e046" stroke-width="1.9"/>
<path d="M218.45,218.01 A89.5,89.5 0 0 1 122.36,213.81" fill="none" stroke="#46e046" stroke-width="1.1" stroke-dasharray="1.5 2.5" opacity="0.8"/>
<path d="M122.36,213.81 A89.5,89.5 0 0 1 128.95,62.99" fill="none" stroke="#46e046" stroke-width="0.9" stroke-dasharray="1 5" opacity="0.6"/>
<path d="M212.12,222.88 A90.9,90.9 0 0 1 135.28,58.12" fill="none" stroke="#a0d0c8" stroke-width="0.8" opacity="0.9"/>
<path d="M121.29,41.52 L141.65,79.96 A68.5,68.5 0 1 0 204.16,79.14 L223.50,40.18 A112,112 0 1 1 121.29,41.52 Z M173.70,209.00 L173.70,252.50" fill="none" stroke="#4cc0a6" stroke-width="0.85"/>
<g transform="translate(317.3,270.3)"><rect width="32.6" height="9.2" fill="#d9d9d6" stroke="#fff" stroke-width="0.6"/><line x1="3" y1="2" x2="30" y2="2" stroke="#222" stroke-width="0.6"/><text x="16.3" y="7.9" font-size="5.2" text-anchor="middle" font-family="Liberation Mono" fill="#000">0.5mm</text></g>
<g transform="translate(342.4,8.4)"><path d="M0,3.5 a3.5,3.5 0 1 1 7,0 c0,2 -1.5,3 -2,5 h-3 c-0.5,-2 -2,-3 -2,-5z" fill="#c8d0f0"/><rect x="2" y="8.5" width="3" height="1.5" fill="#aaa"/></g>
</svg></div>
<div id="grey" class="a" style="left:491px;top:40px;width:233px;height:282px;background:#f8f8f6"></div>
<div class="a" style="left:724px;top:40px;width:2px;height:281px;background:#c9c7bc"></div>
<!-- right toolbar & thumbnail -->
<div class="a" style="left:724.3px;top:40px;width:1.7px;height:282px;background:#cfcdc2"></div>
<div class="a" style="left:726px;top:38px;width:24px;height:394px;background:#ece9d8"></div>
<div class="a" style="left:726px;top:38px;width:0.7px;height:262px;background:#fff"></div>
<div class="a" style="left:726px;top:299.3px;width:24px;height:0.7px;background:#c8c5b4"></div>
<div class="a" style="left:726px;top:300px;width:24px;height:0.7px;background:#fff"></div>
<div class="a" style="left:728.8px;top:42px;width:14.6px;height:10.8px;background:#e6f4f4;border:1px solid #3fbcbc;border-radius:1px"></div>
<svg class="a" style="left:728.8px;top:42px" width="14.6" height="10.5" viewBox="0 0 30 21"><rect x="4" y="4" width="22" height="13" fill="none" stroke="#a8c8c8" stroke-width="1"/><circle cx="7" cy="9" r="2.2" fill="#c01818"/><path d="M12,7 h8 M12,11 h10" stroke="#aab" stroke-width="1"/></svg>
<div class="a" style="left:728.8px;top:59.6px;width:14.6px;height:10.3px;background:#f5f4ee;border:0.6px solid #c9c6b6;border-radius:0.5px"></div>
<svg class="a" style="left:728.8px;top:59.6px" width="14.6" height="10.5" viewBox="0 0 30 21"><path d="M4,17 L27,4" stroke="#444" stroke-width="1.2"/><path d="M14,17 h13" stroke="#bbb" stroke-width="0.8"/></svg>
<div class="a" style="left:728.8px;top:76.3px;width:14.6px;height:10.3px;background:#f5f4ee;border:0.6px solid #c9c6b6;border-radius:0.5px"></div>
<svg class="a" style="left:728.8px;top:76.3px" width="14.6" height="10.5" viewBox="0 0 30 21"><circle cx="15" cy="10.5" r="6" fill="none" stroke="#555" stroke-width="1"/><circle cx="9" cy="12" r="1.5" fill="#444"/></svg>
<div class="a" style="left:728.8px;top:93px;width:14.6px;height:10.3px;background:#f5f4ee;border:0.6px solid #c9c6b6;border-radius:0.5px"></div>
<svg class="a" style="left:728.8px;top:93px" width="14.6" height="10.5" viewBox="0 0 30 21"><path d="M5,17 L27,5" stroke="#444" stroke-width="1.2"/><circle cx="12" cy="13" r="1.8" fill="#333"/></svg>
<div class="a" style="left:728.8px;top:109.7px;width:14.6px;height:10.3px;background:#f5f4ee;border:0.6px solid #c9c6b6;border-radius:0.5px"></div>
<svg class="a" style="left:728.8px;top:109.7px" width="14.6" height="10.5" viewBox="0 0 30 21"><circle cx="15" cy="10.5" r="6" fill="none" stroke="#555" stroke-width="1"/><circle cx="15" cy="4.5" r="1.3" fill="#333"/><circle cx="10" cy="15" r="1.3" fill="#333"/><circle cx="20" cy="15" r="1.3" fill="#333"/></svg>
<div class="a" style="left:728.8px;top:127.3px;width:14.6px;height:10.3px;background:#f5f4ee;border:0.6px solid #c9c6b6;border-radius:0.5px"></div>
<svg class="a" style="left:728.8px;top:127.3px" width="14.6" height="10.5" viewBox="0 0 30 21"><path d="M5,4 L26,17" stroke="#555" stroke-width="1"/><circle cx="8" cy="5" r="1.8" fill="#333"/></svg>
<div class="a" style="left:728.8px;top:144.4px;width:14.6px;height:10.3px;background:#f5f4ee;border:0.6px solid #c9c6b6;border-radius:0.5px"></div>
<svg class="a" style="left:728.8px;top:144.4px" width="14.6" height="10.5" viewBox="0 0 30 21"><path d="M5,4 L26,17" stroke="#555" stroke-width="1"/><circle cx="24" cy="16" r="1.8" fill="#333"/></svg>
<div class="a" style="left:728.8px;top:161.2px;width:14.6px;height:10.3px;background:#f5f4ee;border:0.6px solid #c9c6b6;border-radius:0.5px"></div>
<svg class="a" style="left:728.8px;top:161.2px" width="14.6" height="10.5" viewBox="0 0 30 21"><circle cx="15" cy="10.5" r="6" fill="none" stroke="#888" stroke-width="1" stroke-dasharray="2 1"/><circle cx="15" cy="10.5" r="1.8" fill="#444"/></svg>
<div class="a" style="left:728.8px;top:178.3px;width:14.6px;height:10.3px;background:#f5f4ee;border:0.6px solid #c9c6b6;border-radius:0.5px"></div>
<svg class="a" style="left:728.8px;top:178.3px" width="14.6" height="10.5" viewBox="0 0 30 21"><circle cx="15" cy="10.5" r="5" fill="none" stroke="#bbb" stroke-width="1" stroke-dasharray="2 1"/><circle cx="15" cy="10.5" r="2" fill="#222"/></svg>
<div class="a" style="left:728.8px;top:195.3px;width:14.6px;height:10.3px;background:#f5f4ee;border:0.6px solid #c9c6b6;border-radius:0.5px"></div>
<svg class="a" style="left:728.8px;top:195.3px" width="14.6" height="10.5" viewBox="0 0 30 21"><path d="M15,3 v15 M4,10.5 h22" stroke="#999" stroke-width="0.8" stroke-dasharray="2 1"/><circle cx="15" cy="7" r="1.5" fill="#333"/></svg>
<div class="a" style="left:728.8px;top:212.4px;width:14.6px;height:10.3px;background:#f5f4ee;border:0.6px solid #c9c6b6;border-radius:0.5px"></div>
<svg class="a" style="left:728.8px;top:212.4px" width="14.6" height="10.5" viewBox="0 0 30 21"><path d="M4,4 h22 v14 h-22z" fill="none" stroke="#aaa" stroke-width="0.8" stroke-dasharray="2 1"/><path d="M12,3 L25,17 M17,12 l7,6" stroke="#444" stroke-width="1.2"/></svg>
<div class="a" style="left:728.8px;top:229.2px;width:14.6px;height:10.3px;background:#f5f4ee;border:0.6px solid #c9c6b6;border-radius:0.5px"></div>
<svg class="a" style="left:728.8px;top:229.2px" width="14.6" height="10.5" viewBox="0 0 30 21"><path d="M6,6 l6,-3 7,3 6,4 -3,7 -9,1 -6,-4z" fill="none" stroke="#555" stroke-width="1" stroke-dasharray="2 1"/></svg>
<div class="a" style="left:728.8px;top:245.8px;width:14.6px;height:10.3px;background:#f5f4ee;border:0.6px solid #c9c6b6;border-radius:0.5px"></div>
<svg class="a" style="left:728.8px;top:245.8px" width="14.6" height="10.5" viewBox="0 0 30 21"><path d="M5,6 l6,-3 7,3 5,4 -3,7 -9,1 -6,-4z" fill="none" stroke="#555" stroke-width="1" stroke-dasharray="2 1"/><path d="M19,19 l9,-9" stroke="#333" stroke-width="1.6"/></svg>
<div class="a" style="left:728.8px;top:263.2px;width:14.6px;height:10.3px;background:#f5f4ee;border:0.6px solid #c9c6b6;border-radius:0.5px"></div>
<svg class="a" style="left:728.8px;top:263.2px" width="14.6" height="10.5" viewBox="0 0 30 21"><path d="M4,17 L24,6 M4,13 L20,4" stroke="#444" stroke-width="1"/><path d="M17,19 l10,-9" stroke="#333" stroke-width="1.6"/></svg>
<div class="a" style="left:728.8px;top:280.2px;width:14.6px;height:10.3px;background:#f5f4ee;border:0.6px solid #c9c6b6;border-radius:0.5px"></div>
<svg class="a" style="left:728.8px;top:280.2px" width="14.6" height="10.5" viewBox="0 0 30 21"><circle cx="14" cy="10" r="6" fill="none" stroke="#555" stroke-width="1" stroke-dasharray="2 1"/><path d="M18,19 l9,-9" stroke="#333" stroke-width="1.6"/></svg>
<div class="a" style="left:678.9px;top:276.9px;width:45.4px;height:35.5px;background:#080808;overflow:hidden">
<svg width="46" height="36" viewBox="0 0 46 36"><defs><radialGradient id="tsph" cx="0.45" cy="0.45" r="0.6"><stop offset="0" stop-color="#6a6a6a"/><stop offset="0.7" stop-color="#4a4a4a"/><stop offset="1" stop-color="#2c2c2c"/></radialGradient></defs>
<rect x="21.3" y="0" width="1.2" height="7" fill="#888"/><rect x="23.6" y="0" width="1.2" height="7" fill="#888"/>
<circle cx="22.9" cy="18.8" r="11.3" fill="url(#tsph)"/>
<circle cx="21" cy="16.5" r="0.9" fill="#ddd"/><circle cx="26" cy="17" r="0.9" fill="#ddd"/><circle cx="24" cy="21.5" r="0.9" fill="#ddd"/>
</svg></div>
<div class="a" style="left:679.8px;top:313.9px;width:10.7px;height:7.4px;background:#fff;border:0.8px solid #3a3a3a;border-radius:1.2px"></div>
<svg class="a" style="left:679.8px;top:313.9px" width="10.7" height="7.4" viewBox="0 0 21.4 14.8"><path d="M3.5,4.5 l3,-2 v9.5 M3,11.5 h7 M14,4.5 l3,-2 v9.5 M13.5,11.5 h7" stroke="#111" stroke-width="2.4" fill="none"/><rect x="10.4" y="4.6" width="2.4" height="2.4" fill="#111"/><rect x="10.4" y="9" width="2.4" height="2.4" fill="#111"/></svg>
<div class="a" style="left:694px;top:315px;width:29px;height:1.2px;background:#d6d4cc;border-top:0.5px solid #aaa"></div>
<div class="a" style="left:693.6px;top:313.6px;width:3.6px;height:5px;background:linear-gradient(#fff,#ccc);border:0.5px solid #999;border-radius:1px 1px 2px 2px"></div>
<div class="a" style="left:696px;top:319.5px;width:27px;height:1px;background:repeating-linear-gradient(90deg,#aaa 0 0.6px,transparent 0.6px 2.2px)"></div>

<!-- image tabs -->
<div class="a" style="left:138.4px;top:322px;width:587.6px;height:17px;background:linear-gradient(90deg,#ebe8da,#ece9dc)"></div>
<div class="a" style="left:138.4px;top:321.6px;width:353px;height:1.2px;background:#fdfdfb"></div>
<div class="a" style="left:139.4px;top:323.8px;width:33px;height:10px;background:linear-gradient(#fefefc,#efeee6);border:0.5px solid #d0cec2;border-top:none"></div>
<svg class="a" style="left:142px;top:325.5px" width="6" height="6" viewBox="0 0 12 12"><path d="M1,8 L6,1 L11,4 L6,11z" fill="#3a8ad8" stroke="#1a4a8a" stroke-width="0.8"/><path d="M1,8 L6,11 L6,8z" fill="#2a6a3a"/></svg>
<div class="t" style="left:150.5px;top:327.6px;font-size:4.8px">Editor</div>
<div class="a" style="left:173.5px;top:322.5px;width:37.5px;height:12px;background:#fcfcfa"></div>
<div class="a" style="left:173.5px;top:333.8px;width:37.5px;height:1.3px;background:#efb83a"></div>
<svg class="a" style="left:177px;top:325px" width="5" height="7" viewBox="0 0 10 14"><rect x="2" y="0.5" width="6" height="10" fill="#aaa" stroke="#444" stroke-width="1"/><rect x="3" y="10" width="4" height="3.5" fill="#555"/></svg>
<div class="t" style="left:186.5px;top:327.6px;font-size:4.8px">Camera</div>
<div class="a" style="left:212px;top:323.8px;width:33px;height:10px;background:linear-gradient(#fefefc,#efeee6);border:0.5px solid #d0cec2;border-top:none"></div>
<svg class="a" style="left:214.5px;top:325px" width="6.5" height="6.5" viewBox="0 0 13 13"><path d="M1,12 L4,8 L10,1 L12,3 L6,10z" fill="#3060d0" stroke="#1a3a8a" stroke-width="0.8"/></svg>
<div class="t" style="left:222.8px;top:327.6px;font-size:4.8px">Graphic</div>
<div class="a" style="left:246px;top:323.8px;width:34px;height:10px;background:linear-gradient(#fefefc,#efeee6);border:0.5px solid #d0cec2;border-top:none"></div>
<svg class="a" style="left:248.5px;top:325.5px" width="6.5" height="5.5" viewBox="0 0 13 11"><path d="M4,1 h-3 v9 h3 M9,1 h3 v9 h-3" fill="none" stroke="#1a3aa0" stroke-width="1.4"/><path d="M4,4 l2,1.5 l-2,1.5" fill="#1a3aa0"/></svg>
<div class="t" style="left:258.5px;top:327.6px;font-size:4.8px">Contour</div>

<!-- results table -->
<div class="a" style="left:138.4px;top:338.5px;width:587.6px;height:93.5px;background:#fff;border-top:1px solid #3c3c3c"></div>
<div class="a" style="left:138.4px;top:339.5px;width:580.5px;height:9px;background:linear-gradient(#f3f2e8,#ebeadb 70%,#d8d6c6);border-bottom:0.6px solid #c8c6b4"></div>
<div class="a" style="left:277.5px;top:340.5px;width:0.7px;height:7px;background:#cbc9b8"></div>
<div class="a" style="left:277.5px;top:348.5px;width:0.6px;height:83px;background:#f0efe9"></div>
<div class="a" style="left:338px;top:340.5px;width:0.7px;height:7px;background:#cbc9b8"></div>
<div class="a" style="left:338px;top:348.5px;width:0.6px;height:83px;background:#f0efe9"></div>
<div class="a" style="left:395.3px;top:340.5px;width:0.7px;height:7px;background:#cbc9b8"></div>
<div class="a" style="left:395.3px;top:348.5px;width:0.6px;height:83px;background:#f0efe9"></div>
<div class="a" style="left:452.7px;top:340.5px;width:0.7px;height:7px;background:#cbc9b8"></div>
<div class="a" style="left:452.7px;top:348.5px;width:0.6px;height:83px;background:#f0efe9"></div>
<div class="a" style="left:509.2px;top:340.5px;width:0.7px;height:7px;background:#cbc9b8"></div>
<div class="a" style="left:509.2px;top:348.5px;width:0.6px;height:83px;background:#f0efe9"></div>
<div class="a" style="left:566px;top:340.5px;width:0.7px;height:7px;background:#cbc9b8"></div>
<div class="a" style="left:566px;top:348.5px;width:0.6px;height:83px;background:#f0efe9"></div>
<div class="a" style="left:622.8px;top:340.5px;width:0.7px;height:7px;background:#cbc9b8"></div>
<div class="a" style="left:622.8px;top:348.5px;width:0.6px;height:83px;background:#f0efe9"></div>
<div class="a" style="left:679.5px;top:341px;width:0.6px;height:6px;background:#dddbcc"></div>
<div class="t" style="left:142.5px;top:342.6px;font-size:6.1px;font-family:'Liberation Mono',monospace">Name</div>
<div class="t" style="left:268.7px;width:60px;text-align:right;top:342.6px;font-size:6.1px;font-family:'Liberation Mono',monospace">X/R</div>
<div class="t" style="left:326px;width:60px;text-align:right;top:342.6px;font-size:6.1px;font-family:'Liberation Mono',monospace">Y/A</div>
<div class="t" style="left:382px;width:60px;text-align:right;top:342.6px;font-size:6.1px;font-family:'Liberation Mono',monospace">Z</div>
<div class="t" style="left:438.8px;width:60px;text-align:right;top:342.6px;font-size:6.1px;font-family:'Liberation Mono',monospace">A1</div>
<div class="t" style="left:496px;width:60px;text-align:right;top:342.6px;font-size:6.1px;font-family:'Liberation Mono',monospace">A2</div>
<div class="t" style="left:554px;width:60px;text-align:right;top:342.6px;font-size:6.1px;font-family:'Liberation Mono',monospace">A3</div>
<div class="t" style="left:611px;width:60px;text-align:right;top:342.6px;font-size:6.1px;font-family:'Liberation Mono',monospace">LAD</div>
<div class="a" style="left:139px;top:356.20px;width:579px;height:0.6px;background:#efeee8"></div>
<svg class="a" style="left:139.8px;top:349.70px" width="6.8" height="6.8" viewBox="0 0 14 14"><circle cx="7" cy="7.5" r="5" fill="none" stroke="#c82020" stroke-width="1.3" stroke-dasharray="2.2 1.6"/><circle cx="7" cy="2.2" r="1.5" fill="#d81818"/><circle cx="2.3" cy="10" r="1.5" fill="#d81818"/><circle cx="11.7" cy="10" r="1.5" fill="#d81818"/></svg>
<div class="t" style="left:147.5px;top:350.60px;font-size:6.1px;font-family:'Liberation Mono',monospace;color:#111">Esfera</div>
<div class="t" style="left:275.3px;width:60px;text-align:right;top:350.60px;font-size:6.1px;font-family:'Liberation Mono',monospace;color:#2a2a2a;-webkit-text-stroke:0">519.8361</div>
<div class="t" style="left:332px;width:60px;text-align:right;top:350.60px;font-size:6.1px;font-family:'Liberation Mono',monospace;color:#2a2a2a;-webkit-text-stroke:0">-0.1065</div>
<div class="t" style="left:390px;width:60px;text-align:right;top:350.60px;font-size:6.1px;font-family:'Liberation Mono',monospace;color:#2a2a2a;-webkit-text-stroke:0">-0.0062</div>
<div class="t" style="left:618px;width:60px;text-align:right;top:350.60px;font-size:6.1px;font-family:'Liberation Mono',monospace;color:#2a2a2a;-webkit-text-stroke:0">3.0044</div>
<div class="a" style="left:139px;top:363.78px;width:579px;height:0.6px;background:#efeee8"></div>
<svg class="a" style="left:139.8px;top:357.28px" width="6.8" height="6.8" viewBox="0 0 14 14"><circle cx="7" cy="7.5" r="5" fill="none" stroke="#c82020" stroke-width="1.3" stroke-dasharray="2.2 1.6"/><circle cx="7" cy="2.2" r="1.5" fill="#d81818"/><circle cx="2.3" cy="10" r="1.5" fill="#d81818"/><circle cx="11.7" cy="10" r="1.5" fill="#d81818"/></svg>
<div class="t" style="left:147.5px;top:358.18px;font-size:6.1px;font-family:'Liberation Mono',monospace;color:#111">Esfera</div>
<div class="t" style="left:275.3px;width:60px;text-align:right;top:358.18px;font-size:6.1px;font-family:'Liberation Mono',monospace;color:#2a2a2a;-webkit-text-stroke:0">519.8357</div>
<div class="t" style="left:332px;width:60px;text-align:right;top:358.18px;font-size:6.1px;font-family:'Liberation Mono',monospace;color:#2a2a2a;-webkit-text-stroke:0">-0.1086</div>
<div class="t" style="left:390px;width:60px;text-align:right;top:358.18px;font-size:6.1px;font-family:'Liberation Mono',monospace;color:#2a2a2a;-webkit-text-stroke:0">-0.0063</div>
<div class="t" style="left:618px;width:60px;text-align:right;top:358.18px;font-size:6.1px;font-family:'Liberation Mono',monospace;color:#2a2a2a;-webkit-text-stroke:0">3.0051</div>
<div class="a" style="left:139px;top:371.36px;width:579px;height:0.6px;background:#efeee8"></div>
<svg class="a" style="left:139.8px;top:364.86px" width="6.8" height="6.8" viewBox="0 0 14 14"><circle cx="7" cy="7.5" r="5" fill="none" stroke="#c82020" stroke-width="1.3" stroke-dasharray="2.2 1.6"/><circle cx="7" cy="2.2" r="1.5" fill="#d81818"/><circle cx="2.3" cy="10" r="1.5" fill="#d81818"/><circle cx="11.7" cy="10" r="1.5" fill="#d81818"/></svg>
<div class="t" style="left:147.5px;top:365.76px;font-size:6.1px;font-family:'Liberation Mono',monospace;color:#111">Esfera</div>
<div class="t" style="left:275.3px;width:60px;text-align:right;top:365.76px;font-size:6.1px;font-family:'Liberation Mono',monospace;color:#2a2a2a;-webkit-text-stroke:0">519.8354</div>
<div class="t" style="left:332px;width:60px;text-align:right;top:365.76px;font-size:6.1px;font-family:'Liberation Mono',monospace;color:#2a2a2a;-webkit-text-stroke:0">-0.1089</div>
<div class="t" style="left:390px;width:60px;text-align:right;top:365.76px;font-size:6.1px;font-family:'Liberation Mono',monospace;color:#2a2a2a;-webkit-text-stroke:0">-0.0063</div>
<div class="t" style="left:618px;width:60px;text-align:right;top:365.76px;font-size:6.1px;font-family:'Liberation Mono',monospace;color:#2a2a2a;-webkit-text-stroke:0">3.0057</div>
<div class="a" style="left:139px;top:378.94px;width:579px;height:0.6px;background:#efeee8"></div>
<svg class="a" style="left:139.8px;top:372.44px" width="6.8" height="6.8" viewBox="0 0 14 14"><circle cx="7" cy="7.5" r="5" fill="none" stroke="#c82020" stroke-width="1.3" stroke-dasharray="2.2 1.6"/><circle cx="7" cy="2.2" r="1.5" fill="#d81818"/><circle cx="2.3" cy="10" r="1.5" fill="#d81818"/><circle cx="11.7" cy="10" r="1.5" fill="#d81818"/></svg>
<div class="t" style="left:147.5px;top:373.34px;font-size:6.1px;font-family:'Liberation Mono',monospace;color:#111">Esfera</div>
<div class="t" style="left:275.3px;width:60px;text-align:right;top:373.34px;font-size:6.1px;font-family:'Liberation Mono',monospace;color:#2a2a2a;-webkit-text-stroke:0">559.9277</div>
<div class="t" style="left:332px;width:60px;text-align:right;top:373.34px;font-size:6.1px;font-family:'Liberation Mono',monospace;color:#2a2a2a;-webkit-text-stroke:0">0.1504</div>
<div class="t" style="left:390px;width:60px;text-align:right;top:373.34px;font-size:6.1px;font-family:'Liberation Mono',monospace;color:#2a2a2a;-webkit-text-stroke:0">-0.0060</div>
<div class="t" style="left:618px;width:60px;text-align:right;top:373.34px;font-size:6.1px;font-family:'Liberation Mono',monospace;color:#2a2a2a;-webkit-text-stroke:0">3.0080</div>
<div class="a" style="left:139px;top:386.52px;width:579px;height:0.6px;background:#efeee8"></div>
<svg class="a" style="left:139.8px;top:380.02px" width="6.8" height="6.8" viewBox="0 0 14 14"><circle cx="7" cy="7.5" r="5" fill="none" stroke="#c82020" stroke-width="1.3" stroke-dasharray="2.2 1.6"/><circle cx="7" cy="2.2" r="1.5" fill="#d81818"/><circle cx="2.3" cy="10" r="1.5" fill="#d81818"/><circle cx="11.7" cy="10" r="1.5" fill="#d81818"/></svg>
<div class="t" style="left:147.5px;top:380.92px;font-size:6.1px;font-family:'Liberation Mono',monospace;color:#111">Esfera</div>
<div class="t" style="left:275.3px;width:60px;text-align:right;top:380.92px;font-size:6.1px;font-family:'Liberation Mono',monospace;color:#2a2a2a;-webkit-text-stroke:0">559.9231</div>
<div class="t" style="left:332px;width:60px;text-align:right;top:380.92px;font-size:6.1px;font-family:'Liberation Mono',monospace;color:#2a2a2a;-webkit-text-stroke:0">0.1476</div>
<div class="t" style="left:390px;width:60px;text-align:right;top:380.92px;font-size:6.1px;font-family:'Liberation Mono',monospace;color:#2a2a2a;-webkit-text-stroke:0">-0.0058</div>
<div class="t" style="left:618px;width:60px;text-align:right;top:380.92px;font-size:6.1px;font-family:'Liberation Mono',monospace;color:#2a2a2a;-webkit-text-stroke:0">3.0050</div>
<div class="a" style="left:139px;top:394.10px;width:579px;height:0.6px;background:#efeee8"></div>
<svg class="a" style="left:139.8px;top:387.60px" width="6.8" height="6.8" viewBox="0 0 14 14"><circle cx="7" cy="7.5" r="5" fill="none" stroke="#c82020" stroke-width="1.3" stroke-dasharray="2.2 1.6"/><circle cx="7" cy="2.2" r="1.5" fill="#d81818"/><circle cx="2.3" cy="10" r="1.5" fill="#d81818"/><circle cx="11.7" cy="10" r="1.5" fill="#d81818"/></svg>
<div class="t" style="left:147.5px;top:388.50px;font-size:6.1px;font-family:'Liberation Mono',monospace;color:#111">Esfera</div>
<div class="t" style="left:275.3px;width:60px;text-align:right;top:388.50px;font-size:6.1px;font-family:'Liberation Mono',monospace;color:#2a2a2a;-webkit-text-stroke:0">559.9235</div>
<div class="t" style="left:332px;width:60px;text-align:right;top:388.50px;font-size:6.1px;font-family:'Liberation Mono',monospace;color:#2a2a2a;-webkit-text-stroke:0">0.1472</div>
<div class="t" style="left:390px;width:60px;text-align:right;top:388.50px;font-size:6.1px;font-family:'Liberation Mono',monospace;color:#2a2a2a;-webkit-text-stroke:0">-0.0058</div>
<div class="t" style="left:618px;width:60px;text-align:right;top:388.50px;font-size:6.1px;font-family:'Liberation Mono',monospace;color:#2a2a2a;-webkit-text-stroke:0">3.0048</div>
<div class="a" style="left:139px;top:401.68px;width:579px;height:0.6px;background:#efeee8"></div>
<svg class="a" style="left:139.8px;top:395.18px" width="6.8" height="6.8" viewBox="0 0 14 14"><circle cx="7" cy="7.5" r="5" fill="none" stroke="#c82020" stroke-width="1.3" stroke-dasharray="2.2 1.6"/><circle cx="7" cy="2.2" r="1.5" fill="#d81818"/><circle cx="2.3" cy="10" r="1.5" fill="#d81818"/><circle cx="11.7" cy="10" r="1.5" fill="#d81818"/></svg>
<div class="t" style="left:147.5px;top:396.08px;font-size:6.1px;font-family:'Liberation Mono',monospace;color:#111">Esfera</div>
<div class="t" style="left:275.3px;width:60px;text-align:right;top:396.08px;font-size:6.1px;font-family:'Liberation Mono',monospace;color:#2a2a2a;-webkit-text-stroke:0">599.8595</div>
<div class="t" style="left:332px;width:60px;text-align:right;top:396.08px;font-size:6.1px;font-family:'Liberation Mono',monospace;color:#2a2a2a;-webkit-text-stroke:0">-0.0001</div>
<div class="t" style="left:390px;width:60px;text-align:right;top:396.08px;font-size:6.1px;font-family:'Liberation Mono',monospace;color:#2a2a2a;-webkit-text-stroke:0">-0.0068</div>
<div class="t" style="left:618px;width:60px;text-align:right;top:396.08px;font-size:6.1px;font-family:'Liberation Mono',monospace;color:#2a2a2a;-webkit-text-stroke:0">3.0075</div>
<div class="a" style="left:139px;top:409.26px;width:579px;height:0.6px;background:#efeee8"></div>
<svg class="a" style="left:139.8px;top:402.76px" width="6.8" height="6.8" viewBox="0 0 14 14"><circle cx="7" cy="7.5" r="5" fill="none" stroke="#c82020" stroke-width="1.3" stroke-dasharray="2.2 1.6"/><circle cx="7" cy="2.2" r="1.5" fill="#d81818"/><circle cx="2.3" cy="10" r="1.5" fill="#d81818"/><circle cx="11.7" cy="10" r="1.5" fill="#d81818"/></svg>
<div class="t" style="left:147.5px;top:403.66px;font-size:6.1px;font-family:'Liberation Mono',monospace;color:#111">Esfera</div>
<div class="t" style="left:275.3px;width:60px;text-align:right;top:403.66px;font-size:6.1px;font-family:'Liberation Mono',monospace;color:#2a2a2a;-webkit-text-stroke:0">599.8621</div>
<div class="t" style="left:332px;width:60px;text-align:right;top:403.66px;font-size:6.1px;font-family:'Liberation Mono',monospace;color:#2a2a2a;-webkit-text-stroke:0">0.0001</div>
<div class="t" style="left:390px;width:60px;text-align:right;top:403.66px;font-size:6.1px;font-family:'Liberation Mono',monospace;color:#2a2a2a;-webkit-text-stroke:0">-0.0067</div>
<div class="t" style="left:618px;width:60px;text-align:right;top:403.66px;font-size:6.1px;font-family:'Liberation Mono',monospace;color:#2a2a2a;-webkit-text-stroke:0">3.0080</div>
<div class="a" style="left:139px;top:416.84px;width:579px;height:0.6px;background:#efeee8"></div>
<svg class="a" style="left:139.8px;top:410.34px" width="6.8" height="6.8" viewBox="0 0 14 14"><circle cx="7" cy="7.5" r="5" fill="none" stroke="#c82020" stroke-width="1.3" stroke-dasharray="2.2 1.6"/><circle cx="7" cy="2.2" r="1.5" fill="#d81818"/><circle cx="2.3" cy="10" r="1.5" fill="#d81818"/><circle cx="11.7" cy="10" r="1.5" fill="#d81818"/></svg>
<div class="t" style="left:147.5px;top:411.24px;font-size:6.1px;font-family:'Liberation Mono',monospace;color:#111">Esfera</div>
<div class="t" style="left:275.3px;width:60px;text-align:right;top:411.24px;font-size:6.1px;font-family:'Liberation Mono',monospace;color:#2a2a2a;-webkit-text-stroke:0">599.8621</div>
<div class="t" style="left:332px;width:60px;text-align:right;top:411.24px;font-size:6.1px;font-family:'Liberation Mono',monospace;color:#2a2a2a;-webkit-text-stroke:0">0.0000</div>
<div class="t" style="left:390px;width:60px;text-align:right;top:411.24px;font-size:6.1px;font-family:'Liberation Mono',monospace;color:#2a2a2a;-webkit-text-stroke:0">-0.0055</div>
<div class="t" style="left:618px;width:60px;text-align:right;top:411.24px;font-size:6.1px;font-family:'Liberation Mono',monospace;color:#2a2a2a;-webkit-text-stroke:0">3.0077</div>
<div class="a" style="left:139px;top:424.42px;width:579px;height:0.6px;background:#efeee8"></div>
<svg class="a" style="left:139.8px;top:417.92px" width="6.8" height="6.8" viewBox="0 0 14 14"><circle cx="7" cy="7.5" r="5" fill="none" stroke="#c82020" stroke-width="1.3" stroke-dasharray="2.2 1.6"/><circle cx="7" cy="2.2" r="1.5" fill="#d81818"/><circle cx="2.3" cy="10" r="1.5" fill="#d81818"/><circle cx="11.7" cy="10" r="1.5" fill="#d81818"/></svg>
<div class="t" style="left:147.5px;top:418.82px;font-size:6.1px;font-family:'Liberation Mono',monospace;color:#111">Esfera</div>
<div class="t" style="left:275.3px;width:60px;text-align:right;top:418.82px;font-size:6.1px;font-family:'Liberation Mono',monospace;color:#2a2a2a;-webkit-text-stroke:0">639.9570</div>
<div class="t" style="left:332px;width:60px;text-align:right;top:418.82px;font-size:6.1px;font-family:'Liberation Mono',monospace;color:#2a2a2a;-webkit-text-stroke:0">0.1536</div>
<div class="t" style="left:390px;width:60px;text-align:right;top:418.82px;font-size:6.1px;font-family:'Liberation Mono',monospace;color:#2a2a2a;-webkit-text-stroke:0">-0.0065</div>
<div class="t" style="left:618px;width:60px;text-align:right;top:418.82px;font-size:6.1px;font-family:'Liberation Mono',monospace;color:#2a2a2a;-webkit-text-stroke:0">3.0077</div>
<!-- table scrollbar -->
<div class="a" style="left:718.8px;top:339.5px;width:7px;height:92px;background:#fbfbf9"></div>
<div class="a" style="left:719px;top:340.5px;width:6.5px;height:7px;background:linear-gradient(#dde8fd,#b9cff8);border:0.5px solid #b0c4ec;border-radius:1px"></div>
<svg class="a" style="left:720px;top:342.5px" width="4.5" height="3" viewBox="0 0 9 6"><path d="M1,5 L4.5,1.5 L8,5" stroke="#4d6185" stroke-width="1.6" fill="none"/></svg>
<div class="a" style="left:719px;top:409.7px;width:6.5px;height:15.3px;background:linear-gradient(90deg,#c8d8fa,#bcd0f8);border:0.5px solid #a8bff0;border-radius:1px"></div>
<div class="a" style="left:719px;top:425px;width:6.5px;height:6.5px;background:linear-gradient(#dde8fd,#b9cff8);border:0.5px solid #b0c4ec;border-radius:1px"></div>
<svg class="a" style="left:720px;top:426.8px" width="4.5" height="3" viewBox="0 0 9 6"><path d="M1,1 L4.5,4.5 L8,1" stroke="#4d6185" stroke-width="1.6" fill="none"/></svg>
<!-- status bar -->
<div class="a" style="left:0;top:432px;width:750px;height:8px;background:linear-gradient(#cdc9b8 0,#cdc9b8 0.7px,#f2f1e6 1.4px,#ecebdc 55%,#e8ead8)"></div>
<div class="t" style="left:1px;top:435.6px;font-size:4.9px">For Help, press F1</div>
<div class="t" style="left:589.2px;top:435.6px;font-size:4.9px">Camera: 1</div>
<div class="t" style="left:623.3px;top:435.6px;font-size:4.9px">OptiCheck 4.2.381 (22.10.2010)</div>
<div class="t" style="left:705.6px;top:435.6px;font-size:4.9px">NUM</div>

<div class="a" style="left:584px;top:433px;width:0.6px;height:6.5px;background:#cdcab8"></div>
<div class="a" style="left:620px;top:433px;width:0.6px;height:6.5px;background:#cdcab8"></div>
<div class="a" style="left:699.5px;top:433px;width:0.6px;height:6.5px;background:#cdcab8"></div>
<div class="a" style="left:723.6px;top:433px;width:0.6px;height:6.5px;background:#cdcab8"></div>
<!-- taskbar -->
<div class="a" style="left:0;top:439.6px;width:750px;height:29.4px;background:linear-gradient(#dceaf4 0,#dceaf4 0.4px,#1d58c8 0.9px,#2a68d8 2px,#4a90f0 3px,#2d66dc 4px,#2457d9 5.5px,#2358d8 94%,#1c48b8)"></div>
<div class="a" style="left:0;top:441.8px;width:46px;height:14.5px;border-radius:0 6px 6px 0;background:linear-gradient(#5cb85c,#3c9c3c 25%,#379537 75%,#2f7f2f);box-shadow:inset -1px 0 1px rgba(0,0,0,0.25)"></div>
<svg class="a" style="left:5px;top:444.6px" width="9" height="8.6" viewBox="0 0 17 16"><path d="M1,3 c2,-1 4,-1 6,0 l-1,5 c-2,-1 -4,-1 -6,0z" fill="#f05030"/><path d="M8,3 c2,1 4,1 6,0 l-1,5 c-2,1 -4,1 -6,0z" fill="#50c030"/><path d="M0,9 c2,-1 4,-1 6,0 l-1,5 c-2,-1 -4,-1 -6,0z" fill="#3080f0"/><path d="M7,9 c2,1 4,1 6,0 l-1,5 c-2,1 -4,1 -6,0z" fill="#f8d020"/></svg>
<div class="t" style="left:14.6px;top:444.6px;font-size:7.6px;font-weight:bold;font-style:italic;color:#fff;text-shadow:0.5px 0.5px 0.5px rgba(0,0,0,0.5)">Inicio</div>
<div class="a" style="left:50px;top:443px;width:0.8px;height:12px;background:repeating-linear-gradient(#6a9af0 0 1px,#1a48b8 1px 2px)"></div>
<div class="a" style="left:78.6px;top:443px;width:0.8px;height:12px;background:repeating-linear-gradient(#6a9af0 0 1px,#1a48b8 1px 2px)"></div>
<svg class="a" style="left:55.8px;top:446px" width="6.4" height="6.6" viewBox="0 0 13 13"><rect x="1" y="1" width="11" height="11" rx="2" fill="#e8f0ff" stroke="#7aa0e0"/><path d="M4,7 l2,2 4,-5" stroke="#2a60c0" stroke-width="1.5" fill="none"/></svg>
<svg class="a" style="left:66px;top:445.6px" width="7" height="7.4" viewBox="0 0 14 15"><path d="M11,4 c-1,-3 -6,-3 -8,1 c-2,4 0,8 4,8 c2,0 4,-1 5,-3" fill="none" stroke="#e0f0ff" stroke-width="2.2"/><path d="M2,13 c4,-2 9,-7 11,-12" fill="none" stroke="#f0a020" stroke-width="1.2"/></svg>
<div class="a" style="left:83px;top:444px;width:69px;height:10.8px;border-radius:1.5px;background:linear-gradient(#5a9af8,#3c81f3 15%,#3a7ef0 85%,#2f6ce0);box-shadow:inset -0.5px -0.5px 0.5px rgba(0,0,0,0.25),inset 0.5px 0.5px 0.5px rgba(255,255,255,0.3)"></div>
<div class="a" style="left:86px;top:446.3px;width:6.4px;height:6.4px;background:#fff;border-radius:1px"></div><div class="a" style="left:87px;top:447.3px;width:4.4px;height:4.4px;background:#f08a30"></div>
<div class="t" style="left:96px;top:447.2px;font-size:5px;color:#fff">UCCserver - UCC2 - ...</div>
<div class="a" style="left:154px;top:444px;width:71.6px;height:10.8px;border-radius:1.5px;background:linear-gradient(#1a3f9c,#1e4aad 40%,#2150b8);box-shadow:inset 1px 1px 1px rgba(0,0,0,0.4)"></div>
<svg class="a" style="left:157.5px;top:445.5px" width="5" height="8" viewBox="0 0 10 16"><rect x="2" y="1" width="6" height="8" fill="#ddd" stroke="#333" stroke-width="0.8"/><rect x="3" y="9" width="4" height="6" fill="#c8a060"/></svg>
<div class="t" style="left:167px;top:447.2px;font-size:5px;color:#fff">OptiCheck - [Calibrac...</div>
<div class="a" style="left:226px;top:444px;width:70px;height:10.8px;border-radius:1.5px;background:linear-gradient(#5a9af8,#3c81f3 15%,#3a7ef0 85%,#2f6ce0);box-shadow:inset -0.5px -0.5px 0.5px rgba(0,0,0,0.25),inset 0.5px 0.5px 0.5px rgba(255,255,255,0.3)"></div>
<svg class="a" style="left:229px;top:446.4px" width="7.4" height="6" viewBox="0 0 15 12"><path d="M1,2 h5 l1,1.5 h7 v8 h-13z" fill="#f2d060" stroke="#b08a20" stroke-width="0.6"/><path d="M1,5 h13 v6.5 h-13z" fill="#fbe480"/></svg>
<div class="t" style="left:239px;top:447.2px;font-size:5px;color:#fff">2011.03.22 - calibraci...</div>
<div class="a" style="left:298px;top:444px;width:70px;height:10.8px;border-radius:1.5px;background:linear-gradient(#5a9af8,#3c81f3 15%,#3a7ef0 85%,#2f6ce0);box-shadow:inset -0.5px -0.5px 0.5px rgba(0,0,0,0.25),inset 0.5px 0.5px 0.5px rgba(255,255,255,0.3)"></div>
<svg class="a" style="left:302px;top:445.5px" width="6" height="8" viewBox="0 0 12 16"><rect x="3" y="1" width="6" height="6" fill="#d8a850"/><rect x="2" y="6" width="8" height="9" rx="1" fill="#c89040" stroke="#6a4010" stroke-width="0.6"/><circle cx="6" cy="10" r="2" fill="#3050c0"/></svg>
<div class="t" style="left:311px;top:447.2px;font-size:5px;color:#fff">Dibujo - Paint</div>
<div class="a" style="left:703.8px;top:442.4px;width:46.2px;height:26.6px;background:linear-gradient(90deg,#1290e8,#0f97ea 10%,#0e96ea);border-left:0.7px solid #0a5fc0;box-shadow:inset 0.6px 0 0 #3fb0f4"></div>
<div class="t" style="left:688px;top:453.4px;font-size:5px;color:#fff">ES</div>
<div class="a" style="left:700px;top:452.6px;width:6.2px;height:6.2px;border-radius:50%;background:radial-gradient(circle at 40% 35%,#bfe4ff,#5aa8f0 60%,#2a70d0);border:0.4px solid #fff"></div>
<svg class="a" style="left:701.5px;top:454px" width="3.4" height="3.4" viewBox="0 0 7 7"><path d="M4,1 l-2.5,2.5 2.5,2.5 M6.5,1 l-2.5,2.5 2.5,2.5" stroke="#fff" stroke-width="1" fill="none"/></svg>
<svg class="a" style="left:709px;top:444.5px" width="6" height="6.5" viewBox="0 0 12 13"><rect x="1" y="1" width="6" height="8" fill="#eee" stroke="#555" stroke-width="0.8"/><circle cx="8" cy="9" r="3.2" fill="#fff" stroke="#333" stroke-width="1"/></svg>
<svg class="a" style="left:709px;top:452.5px" width="6.5" height="7" viewBox="0 0 13 14"><path d="M2,12 l4,-6 4,6z" fill="#eee" stroke="#444" stroke-width="0.8"/><circle cx="6" cy="4" r="2.3" fill="#3060c0"/><circle cx="10" cy="11" r="2" fill="#c03030"/></svg>
<div class="t" style="left:718.5px;width:26px;text-align:center;top:445px;font-size:5px;color:#fff">12:50 PM</div>
<div class="t" style="left:718.5px;width:26px;text-align:center;top:453.4px;font-size:5px;color:#fff">Tuesday</div>
<div class="t" style="left:718.5px;width:26px;text-align:center;top:461.8px;font-size:5px;color:#fff">3/22/2011</div>
</body></html>
